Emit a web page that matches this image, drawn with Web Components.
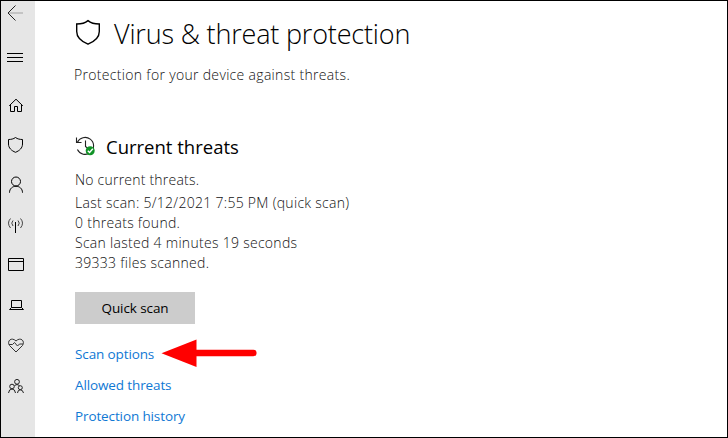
<!DOCTYPE html>
<html lang="en">
<head>
<meta charset="utf-8">
<title>Virus &amp; threat protection</title>
<style>
    html, body {
        margin: 0;
        height: 100%;
    }
    body {
        font-family: "Open Sans", "Noto Sans", sans-serif;
        color: #000;
        overflow: hidden;
    }
</style>
</head>
<body>
<security-app></security-app>

<script>
const ICONS = {
    back: '<path d="M14.5 4.5L7 12l7.5 7.5" stroke="#222"/><path d="M8 12H22" stroke="#c4c4c4" stroke-width="2"/>',
    menu: '<path d="M6 28.5H22M6 32.5H22M6 36.5H22"/>',
    home: '<path d="M8.2 20.8L15 14.2l6.8 6.6M9.5 20V26.5H13.5V21.5H16.5V26.5H20.5V20"/>',
    shield: '<path d="M14.5 12.5C12.5 14 10 14.5 7.5 14.5V19c0 4 3 6.7 7 8.3 4-1.6 7-4.3 7-8.3v-4.5C19 14.5 16.5 14 14.5 12.5z"/>',
    person: '<circle cx="15" cy="16.5" r="4.5"/><path d="M8.5 27.7c0-8.6 13-8.6 13 0"/>',
    network: '<path d="M14.5 17V28"/><path d="M12 15.5q-2.5 2.5 0 5.5M17 15.5q2.5 2.5 0 5.5M9.5 13.5q-4 4.5 0 9.5M19.5 13.5q4 4.5 0 9.5" stroke="#444"/>',
    browser: '<path d="M7.5 13.5h15v12h-15zM7.5 16.5h15"/>',
    device: '<path d="M10.5 22.5V15.5h10v7zM10.5 22.5l-2 2h14l-2-2"/>',
    health: '<path d="M15 27L8.5 20.5C5.5 16 10.5 11.5 15 16c4.5-4.5 9.5 0 6.5 4.5zM8 19.5h3.5l2-2 3 3.5 2-2H22" stroke="#333"/>',
    family: '<g stroke="#222"><circle cx="16" cy="16.8" r="2.4"/><circle cx="11" cy="21.5" r="2.3"/><circle cx="19.3" cy="22.7" r="2"/><path d="M7.5 28q.5-4 3.5-4t3.5 4M16.5 28q.3-3.2 2.8-3.2t3.2 3.2M13.5 20.5q2.5-2 5 0"/></g>'
};

class NavIcon extends HTMLElement {
    connectedCallback() {
        const height = this.getAttribute('height') || 40;
        this.attachShadow({ mode: 'open' }).innerHTML = `
            <style>
                :host {
                    display: block;
                    height: ${height}px;
                }
                svg {
                    display: block;
                    fill: none;
                    stroke: #000;
                }
            </style>
            <svg width="34" height="${height}">${ICONS[this.getAttribute('name')]}</svg>
        `;
    }
}

class SideNav extends HTMLElement {
    constructor() {
        super();
        this.attachShadow({ mode: 'open' }).innerHTML = `
            <style>
                :host {
                    display: flex;
                    flex-direction: column;
                    width: 34px;
                    flex: none;
                    background: #e6e6e6;
                }
            </style>
            <slot></slot>
        `;
    }
}

class PageHeader extends HTMLElement {
    constructor() {
        super();
        this.attachShadow({ mode: 'open' }).innerHTML = `
            <style>
                :host {
                    display: block;
                    height: 117px;
                }
                .row {
                    display: flex;
                    padding-top: 13px;
                }
                svg {
                    width: 39px;
                    height: 40px;
                    flex: none;
                    fill: none;
                    stroke: #000;
                    stroke-width: 1.4;
                }
                h1 {
                    margin: 0;
                    font-size: 27px;
                    line-height: 40px;
                    font-weight: 300;
                    white-space: nowrap;
                    letter-spacing: -0.18px;
                }
                p {
                    margin: 11px 0 0 -1px;
                    font-size: 14px;
                    line-height: 20px;
                    font-weight: 300;
                    color: #111;
                    white-space: nowrap;
                    letter-spacing: 0.32px;
                }
            </style>
            <div class="row">
                <svg viewBox="0 0 39 40"><path d="M13 6.6C10 9.2 6 10 1.7 10V17.5C1.7 23.5 6.5 27.5 13 30.2 19.5 27.5 24.3 23.5 24.3 17.5V10C20 10 16 9.2 13 6.6z"/></svg>
                <h1><slot></slot></h1>
            </div>
            <p><slot name="description"></slot></p>
        `;
    }
}

class ThreatStatus extends HTMLElement {
    constructor() {
        super();
        this.attachShadow({ mode: 'open' }).innerHTML = `
            <style>
                :host {
                    display: block;
                }
                .row {
                    display: flex;
                    height: 52px;
                }
                svg {
                    width: 31px;
                    height: 52px;
                    flex: none;
                    fill: none;
                }
                h2 {
                    margin: 14px 0 0;
                    font-size: 18.5px;
                    line-height: 30px;
                    font-weight: 400;
                    white-space: nowrap;
                }
            </style>
            <div class="row">
                <svg viewBox="0 0 31 52">
                    <path d="M2.3 24.5A8.5 8.5 0 1 1 2.4 31.5M1.5 19.5V24.5H6.5M10.5 22.5V28.5L14 31.5" stroke="#222" stroke-width="1.1"/>
                    <circle cx="15.2" cy="32.7" r="4.5" fill="#109326"/>
                    <path d="M12.8 32.7l1.8 1.8 3.2-3.7" stroke="#fff" stroke-width="1.4"/>
                </svg>
                <h2><slot name="heading"></slot></h2>
            </div>
            <slot></slot>
        `;
    }
}

class StatusLine extends HTMLElement {
    constructor() {
        super();
        this.attachShadow({ mode: 'open' }).innerHTML = `
            <style>
                :host {
                    display: block;
                    font-size: 14px;
                    line-height: 20px;
                    font-weight: 300;
                    letter-spacing: 0.29px;
                    color: #111;
                    white-space: nowrap;
                }
                :host([spaced]) {
                    margin-bottom: 3px;
                    letter-spacing: 0.22px;
                }
            </style>
            <slot></slot>
        `;
    }
}

class ActionButton extends HTMLElement {
    constructor() {
        super();
        this.attachShadow({ mode: 'open' }).innerHTML = `
            <style>
                :host {
                    display: block;
                    margin-top: 19px;
                }
                button {
                    display: block;
                    width: 120px;
                    height: 32px;
                    padding: 0;
                    border: none;
                    background: #ccc;
                    color: #000;
                    font: inherit;
                    font-size: 13.5px;
                    letter-spacing: -0.1px;
                }
            </style>
            <button><slot></slot></button>
        `;
    }
}

class ActionLink extends HTMLElement {
    constructor() {
        super();
        this.attachShadow({ mode: 'open' }).innerHTML = `
            <style>
                :host {
                    display: flex;
                    align-items: center;
                    height: 31px;
                    font-size: 13.5px;
                    letter-spacing: -0.12px;
                    white-space: nowrap;
                }
                a {
                    color: #0f78d4;
                    text-decoration: none;
                }
            </style>
            <a><slot></slot></a>
        `;
    }
}

// Red pointer laid over the page beside a link
class PointerArrow extends HTMLElement {
    constructor() {
        super();
        this.attachShadow({ mode: 'open' }).innerHTML = `
            <style>
                :host {
                    position: absolute;
                    left: 160px;
                    top: 337px;
                }
                svg {
                    display: block;
                }
            </style>
            <svg width="98" height="31">
                <path d="M.5 15.2L35.5 1.5V29z" fill="#f00"/>
                <path d="M34 15H92.3" stroke="#f00" stroke-width="6.5" stroke-linecap="round"/>
            </svg>
        `;
    }
}

class SecurityApp extends HTMLElement {
    constructor() {
        super();
        this.attachShadow({ mode: 'open' }).innerHTML = `
            <style>
                :host {
                    display: flex;
                    position: relative;
                    box-sizing: border-box;
                    width: 728px;
                    height: 438px;
                    border: 1px solid #000;
                    background: #fff;
                }
                main {
                    padding-left: 40px;
                }
                .links {
                    padding-top: 14px;
                }
            </style>
            <side-nav>
                <nav-icon name="back" height="24"></nav-icon>
                <nav-icon name="menu" height="60"></nav-icon>
                <nav-icon name="home"></nav-icon>
                <nav-icon name="shield"></nav-icon>
                <nav-icon name="person"></nav-icon>
                <nav-icon name="network"></nav-icon>
                <nav-icon name="browser"></nav-icon>
                <nav-icon name="device"></nav-icon>
                <nav-icon name="health"></nav-icon>
                <nav-icon name="family"></nav-icon>
            </side-nav>
            <main>
                <page-header>
                    Virus &amp; threat protection
                    <span slot="description">Protection for your device against threats.</span>
                </page-header>
                <threat-status>
                    <span slot="heading">Current threats</span>
                    <status-line spaced>No current threats.</status-line>
                    <status-line>Last scan: 5/12/2021 7:55 PM (quick scan)</status-line>
                    <status-line>0 threats found.</status-line>
                    <status-line>Scan lasted 4 minutes 19 seconds</status-line>
                    <status-line>39333 files scanned.</status-line>
                </threat-status>
                <action-button>Quick scan</action-button>
                <div class="links">
                    <action-link>Scan options</action-link>
                    <action-link>Allowed threats</action-link>
                    <action-link>Protection history</action-link>
                </div>
            </main>
            <pointer-arrow></pointer-arrow>
        `;
    }
}

customElements.define('nav-icon', NavIcon);
customElements.define('side-nav', SideNav);
customElements.define('page-header', PageHeader);
customElements.define('threat-status', ThreatStatus);
customElements.define('status-line', StatusLine);
customElements.define('action-button', ActionButton);
customElements.define('action-link', ActionLink);
customElements.define('pointer-arrow', PointerArrow);
customElements.define('security-app', SecurityApp);
</script>
</body>
</html>
